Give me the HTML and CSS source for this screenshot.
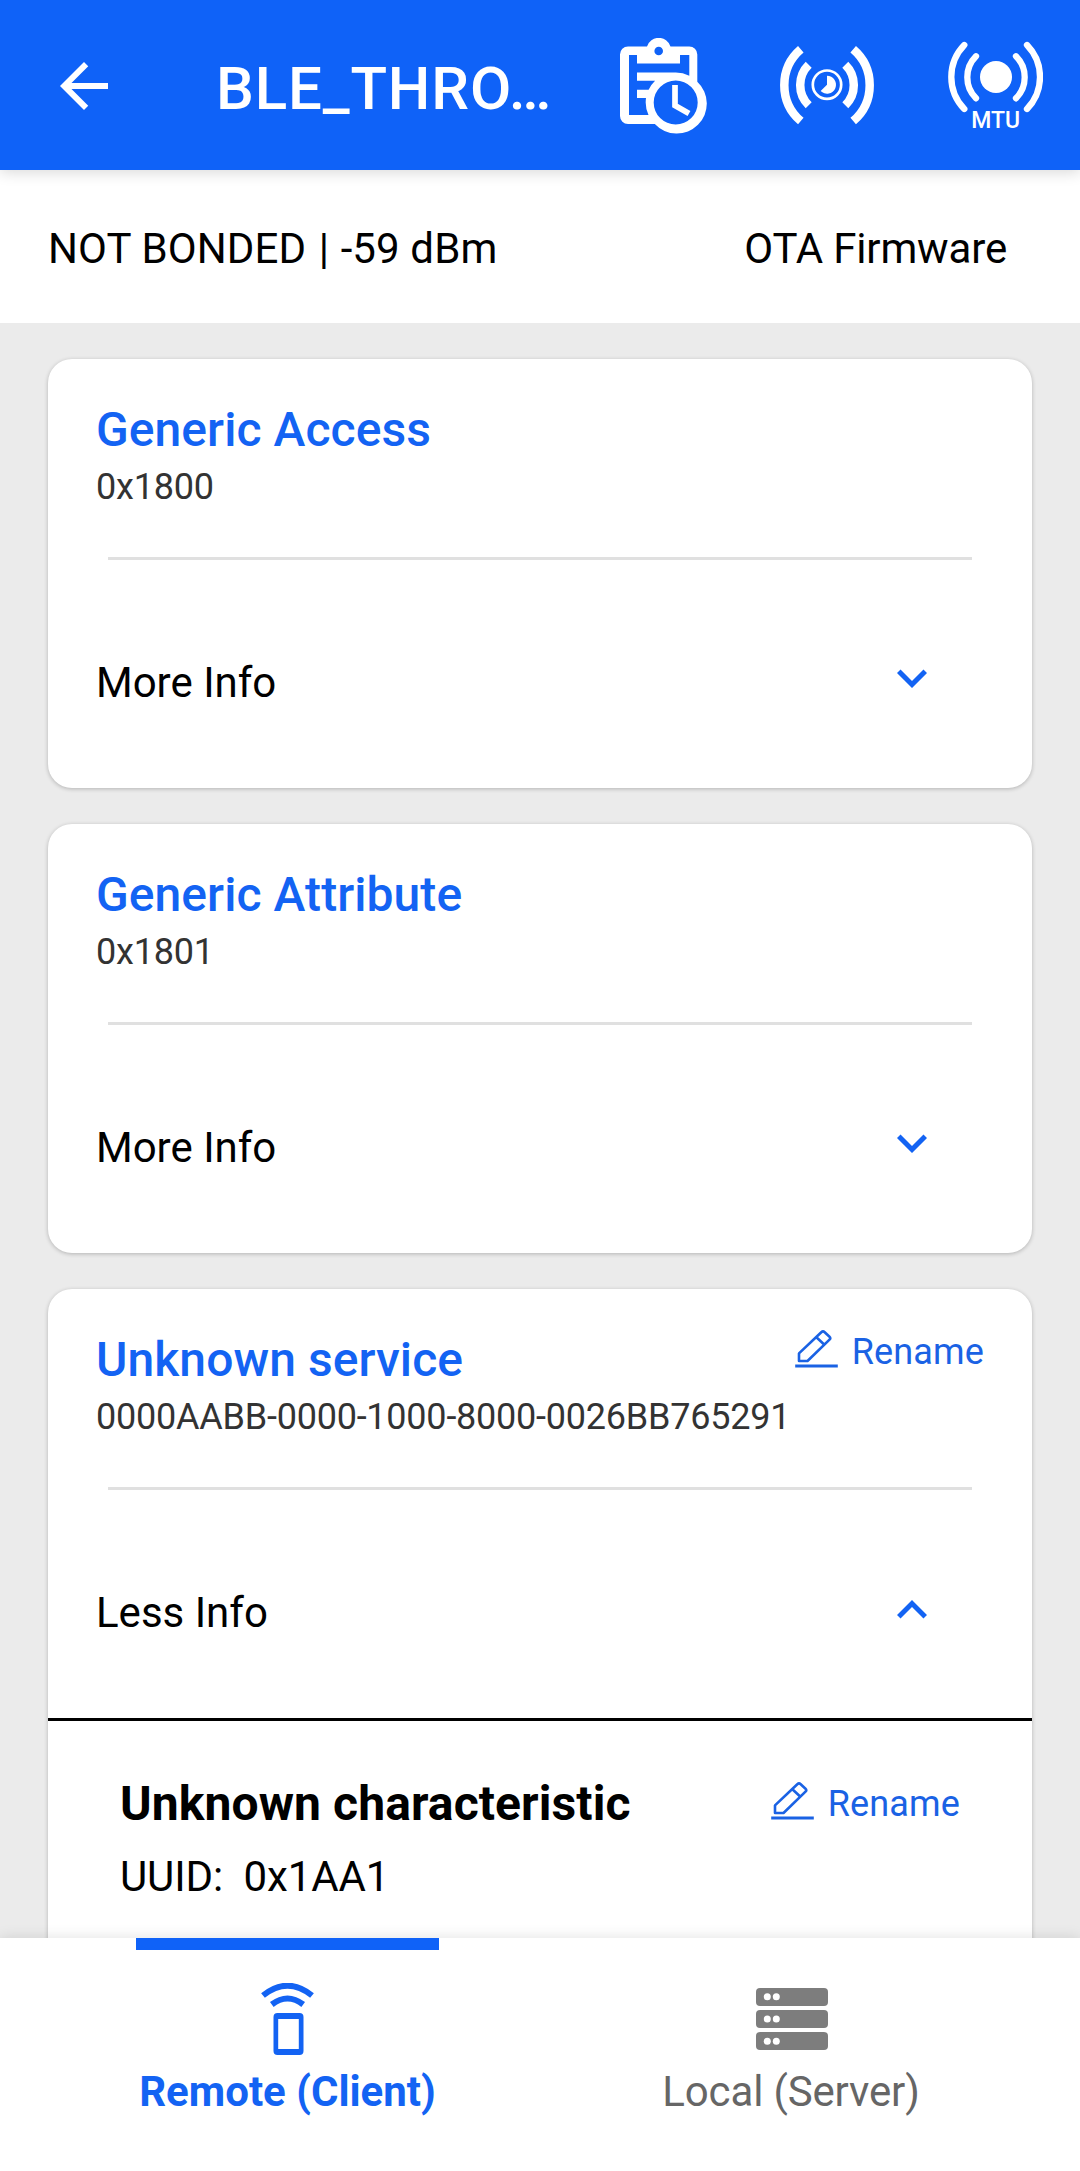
FILE: index.html
```html
<!DOCTYPE html>
<html lang="en">
<head>
<meta charset="utf-8">
<title>BLE_THROUGHPUT</title>
<link rel="stylesheet" href="styles.css">
</head>
<body>
<svg class="defs" aria-hidden="true">
  <symbol id="chevron" viewBox="0 0 24 24"><path d="M7.41 8.59 12 13.17l4.59-4.58L18 10l-6 6-6-6z"/></symbol>
  <symbol id="pencil" viewBox="0 0 43 38"><g fill="none" stroke="currentColor" stroke-width="2.6" stroke-linejoin="round"><path d="M4 31v-7.600L26.300 2.200Q28 .700 29.700 2.200L34.500 6.700Q36 8.200 34.500 9.700L12.500 31ZM21.400 7.200l8 7.500"/><path d="M.200 36h42.600" stroke-width="3"/></g></symbol>
</svg>
<div class="screen">
  <header class="bar">
    <svg class="back" viewBox="0 0 24 24"><path d="M20 11H7.830l5.590-5.590L12 4l-8 8 8 8 1.410-1.410L7.830 13H20z"/></svg>
    <h1 class="title">BLE_THRO…</h1>
    <svg class="action" viewBox="-4 0 96 96">
      <path fill-rule="evenodd" d="M13 8.500H32a12.300 12.300 0 0 1 23.500 0H74.300a8 8 0 0 1 8 8V43.700A30 30 0 1 1 39.800 86H13a8 8 0 0 1-8-8V16.500a8 8 0 0 1 8-8ZM14 17V77H33.500A30 30 0 0 1 31 60H22V51.700H33.600A30 30 0 0 1 40.100 42.700H22V34.500H60.700A30 30 0 0 1 74.300 37.700V17H65V25.500H22V17ZM43.700 8.700a4.300 4.300 0 1 0 0 8.600 4.300 4.300 0 0 0 0-8.600ZM60.700 42.500a22 22 0 1 0 0 44 22 22 0 0 0 0-44Z"/>
      <path class="line" stroke-width="5.700" d="M60 47v20.500l14 8"/>
    </svg>
    <svg class="action" viewBox="0 0 96 96">
      <path class="line" stroke-width="8.500" d="M21.800 11.300A47.200 47.200 0 0 0 21.800 83M29.700 26.700A28.500 28.500 0 0 0 29.700 67.300M74.200 11.300A47.200 47.200 0 0 1 74.200 83M66.300 26.700A28.500 28.500 0 0 1 66.300 67.300"/>
      <circle class="line" cx="48" cy="46.700" r="14.200" stroke-width="2.700"/>
      <path d="M48 37.700a9 9 0 1 1-6.360 15.360L48 46.700Z"/>
    </svg>
    <svg class="action" viewBox="0 0 96 96">
      <path class="line round" stroke-width="6.300" d="M17.300 7A45.900 45.900 0 0 0 17.300 71M29 18.300A29.700 29.700 0 0 0 29 60.300M80 7A45.900 45.900 0 0 1 80 71M69 18.300A29.700 29.700 0 0 1 69 60.300"/>
      <circle cx="49" cy="39" r="16"/>
      <text class="mtu" x="48.700" y="90.300" text-anchor="middle">MTU</text>
    </svg>
  </header>
  <div class="status"><span class="bond">NOT BONDED <span class="sep">|</span> -59 dBm</span><span class="ota">OTA Firmware</span></div>
  <main class="list">
    <section class="card">
      <div class="head"><h2>Generic Access</h2></div>
      <p class="uuid">0x1800</p>
      <hr>
      <div class="toggle"><span>More Info</span><svg class="chev"><use href="#chevron"/></svg></div>
    </section>
    <section class="card">
      <div class="head"><h2>Generic Attribute</h2></div>
      <p class="uuid">0x1801</p>
      <hr>
      <div class="toggle"><span>More Info</span><svg class="chev"><use href="#chevron"/></svg></div>
    </section>
    <section class="card">
      <div class="head"><h2>Unknown service</h2><a class="rename"><svg><use href="#pencil"/></svg>Rename</a></div>
      <p class="uuid">0000AABB-0000-1000-8000-0026BB765291</p>
      <hr>
      <div class="toggle"><span>Less Info</span><svg class="chev up"><use href="#chevron"/></svg></div>
      <div class="characteristic">
        <div class="char-head"><h3>Unknown characteristic</h3><a class="rename"><svg><use href="#pencil"/></svg>Rename</a></div>
        <p class="char-uuid">UUID:&nbsp; 0x1AA1</p>
      </div>
    </section>
  </main>
  <nav class="tabs">
    <a class="tab active">
      <svg viewBox="0 0 72 72"><path fill-rule="evenodd" d="M25.500 30h22a4 4 0 0 1 4 4v34a4 4 0 0 1-4 4h-22a4 4 0 0 1-4-4V34a4 4 0 0 1 4-4Zm.700 6v30h20.600V36Z"/><path class="line" stroke-width="6" d="M11 12.500Q35.500 -7 60 12.500M19.800 21.500Q35.500 9.500 51.200 21.500"/></svg>
      <span>Remote (Client)</span>
    </a>
    <a class="tab local">
      <svg viewBox="0 0 72 72"><g fill="#7d7d7d"><rect y="5" width="72" height="18" rx="4"/><rect y="27" width="72" height="18" rx="4"/><rect y="49" width="72" height="18" rx="4"/></g><g fill="#fff"><circle cx="11.300" cy="13.700" r="3.500"/><circle cx="20.300" cy="13.700" r="3.500"/><circle cx="11.300" cy="36" r="3.500"/><circle cx="20.300" cy="36" r="3.500"/><circle cx="11.300" cy="58.300" r="3.500"/><circle cx="20.300" cy="58.300" r="3.500"/></g></svg>
      <span>Local (Server)</span>
    </a>
  </nav>
</div>
</body>
</html>
```
FILE: styles.css
```css
* { box-sizing: border-box; }
body { margin: 0; font-family: Roboto, sans-serif; color: #000; font-size: 42px; }
h1, h2, h3, p { margin: 0; }
svg { display: block; flex: none; fill: currentColor; }
.defs { width: 0; height: 0; position: absolute; }
.line { fill: none; stroke: currentColor; }
.round { stroke-linecap: round; }
.screen { height: 2171px; display: flex; flex-direction: column; background: #ebebeb; overflow: hidden; }

.bar { flex: none; height: 170px; background: #0f62f8; color: #fff; display: flex; align-items: flex-start; padding: 38px 36px 0 48px; box-shadow: 0 2px 14px rgba(0,0,0,.16); z-index: 1; }
.back { width: 72px; height: 72px; margin-top: 12px; }
.title { flex: none; width: 491px; padding-left: 96px; font-size: 60px; font-weight: 500; line-height: 70px; margin-top: 16px; white-space: nowrap; letter-spacing: .85px; }
.action { width: 96px; height: 96px; margin-right: 72px; }
.action:last-child { margin-right: 0; }
.mtu { font: 500 23px Roboto, sans-serif; }

.status { flex: none; height: 153px; background: #fff; display: flex; justify-content: space-between; padding: 54px 73px 0 48px; line-height: 50px; }
.bond { letter-spacing: .12px; }
.sep { margin: 0 1px 0 2px; }
.ota { letter-spacing: -.15px; }

.list { flex: 1; min-height: 0; overflow: hidden; display: flex; flex-direction: column; gap: 36px; padding: 36px 48px 0; }
.card { flex: none; height: 429px; background: #fff; border-radius: 24px; box-shadow: 0 1px 4px rgba(0,0,0,.24); }
.card:last-child { height: 800px; }
.head { display: flex; justify-content: space-between; padding: 43px 48px 0; height: 100px; }
h2 { font-size: 48px; line-height: 56px; font-weight: 500; color: #1363f3; letter-spacing: .07px; }
.uuid { padding-left: 48px; font-size: 36px; line-height: 42px; color: #333; margin-top: 7px; letter-spacing: -.23px; }
hr { border: 0; height: 3px; background: #e0e0e0; margin: 49px 60px 0; }
.toggle { display: flex; justify-content: space-between; height: 158px; padding: 58px 90px 0 48px; line-height: 50px; margin-top: 40px; }
.chev { width: 60px; height: 60px; color: #1363f3; margin-top: -10px; }
.up { transform: rotate(180deg); margin-top: -8px; }
.rename { display: flex; font-size: 36px; line-height: 42px; color: #1a62e4; gap: 14px; letter-spacing: .15px; margin-top: -1px; }
.rename svg { width: 43px; height: 38px; margin-top: -1px; }
.characteristic { border-top: 3px solid #000; padding: 55px 72px 0; line-height: 50px; margin-top: 30px; }
.char-head { display: flex; justify-content: space-between; align-items: flex-start; height: 76px; }
.char-head .rename { margin-top: 7px; }
.char-uuid { letter-spacing: -.12px; }
h3 { font-size: 48px; line-height: 56px; font-weight: 700; letter-spacing: .1px; }

.tabs { flex: none; height: 233px; background: #fff; display: flex; padding: 0 35px 0 36px; box-shadow: 0 0 14px rgba(0,0,0,.12); z-index: 1; }
.tab { display: flex; flex-direction: column; align-items: center; color: #666; line-height: 50px; }
.tab::before { content: ""; width: 303px; height: 12px; }
.tab svg { width: 72px; height: 72px; margin-top: 33px; }
.tab span { margin-top: 12px; }
.active { width: 503px; color: #1363f3; font-weight: 700; }
.active::before { background: #0f62f8; }
.local { width: 506px; letter-spacing: -.15px; }
.local span { margin-right: 2px; }
```
